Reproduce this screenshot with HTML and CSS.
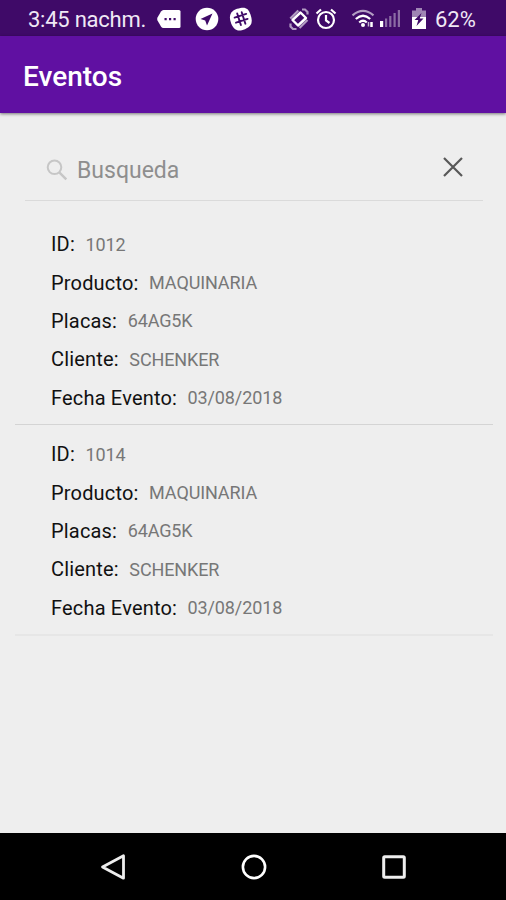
FILE: index.html
```html
<!DOCTYPE html>
<html lang="es">
<head>
  <meta charset="UTF-8">
  <meta name="viewport" content="width=device-width, initial-scale=1.0">
  <title>Eventos</title>
  <link rel="stylesheet" href="styles.css">
</head>
<body>
  <div class="status-bar">
    <span class="clock">3:45 nachm.</span>
    <svg class="icon-message" width="26" height="20" viewBox="0 0 26 20">
      <path d="M7.500 1H23a1.500 1.500 0 0 1 1.500 1.500v15A1.500 1.500 0 0 1 23 19H7.500Q6 19 5 17.500L1.500 11.500Q.8 10 1.500 8.500L5 2.500Q6 1 7.500 1z" fill="#fff"/>
      <path d="M8.500 9h2.200v2.200H8.500zM13 9h2.200v2.200H13zM17.500 9h2.200v2.200h-2.200z" fill="#3f0a68"/>
    </svg>
    <svg class="icon-telegram" width="24" height="24" viewBox="0 0 24 24">
      <circle cx="12" cy="12" r="11.300" fill="#fff"/>
      <path d="M17.500 6.500L5.500 12l4.700 1.500L12 18.500z" fill="#3f0a68"/>
    </svg>
    <svg class="icon-slack" width="24" height="24" viewBox="0 0 24 24">
      <path d="M8 1.800C16 -.5 19 .5 21.500 7.500S23 19.500 16 22.200 5 23.500 2.200 16.500 1 4.500 8 1.800z" fill="#fff"/>
      <path d="M8.200 6.500l3.700 11.500M12.700 5.200l3.700 11.500M5.600 10.600l11.600-3.700M7 15.700l11.600-3.800" stroke="#3f0a68" stroke-width="1.900" stroke-linecap="round"/>
    </svg>
    <svg class="icon-rotate" width="20" height="22" viewBox="0 0 20 22" fill="none" stroke="#fff">
      <path d="M11.500 4.500l5.500 5.500-8 7.500-5.500-5.500z" stroke-width="2.400" stroke-linejoin="round"/>
      <path d="M1.300 10.500l8-8M1.500 15.500v3l2.500 2.500h3.500M13 1.500h3l2.500 2.500v2.500M18.500 12l-8 8" stroke-width="2.200" opacity=".6"/>
    </svg>
    <svg class="icon-alarm" width="22" height="22" viewBox="0 0 22 22" fill="none" stroke="#fff" stroke-width="2.200">
      <circle cx="11" cy="12" r="8"/>
      <path d="M1.500 5.500L6 1.500M20.500 5.500L16 1.500M11 7v5.500l3.500 2.500"/>
    </svg>
    <svg class="icon-wifi" width="26" height="20" viewBox="0 0 26 20" fill="none" stroke="#fff" stroke-width="2.200">
      <path d="M1.500 6.300Q12 -2.500 22.500 6.300" opacity=".6"/>
      <path d="M4.800 10Q12 3.500 19.200 10M8.200 13.500Q12 10 15.800 13.500"/>
      <circle cx="12" cy="16" r="2" fill="#fff" stroke="none"/>
      <path d="M17.500 13v4.500" stroke-width="1.500" opacity=".7"/>
      <path d="M20.500 13v5" stroke-width="2.500"/>
    </svg>
    <svg class="icon-signal" width="21" height="19" viewBox="0 0 21 19" fill="#fff">
      <path d="M0 12h3.200v6H0z"/>
      <path d="M5 9.500h2.200V18H5zM9.200 7h2.200v11H9.200zM13.500 4h2.200v14h-2.200zM17.800 1H20v17h-2.200z" opacity=".4"/>
    </svg>
    <svg class="icon-battery" width="14" height="21" viewBox="0 0 14 21">
      <path d="M4 0h6v2.500h4V9H0V2.500h4z" fill="#fff" opacity=".5"/>
      <path d="M0 9h14v12H0z" fill="#fff"/>
      <path d="M9.500 5L2.500 12h3.800L4.500 18l7-7.500H7.700z" fill="#3f0a68"/>
    </svg>
    <span class="battery-level">62%</span>
  </div>

  <header class="app-bar">
    <h1>Eventos</h1>
  </header>

  <main class="content">
    <div class="search">
      <svg class="search-icon" width="22" height="22" viewBox="0 0 22 22" fill="none" stroke="#c6c6c6" stroke-width="2">
        <circle cx="8.500" cy="8.300" r="6.800"/>
        <path d="M13.300 13.300l7 7" stroke-width="2.400"/>
      </svg>
      <span class="search-hint">Busqueda</span>
      <svg class="search-clear" width="20" height="20" viewBox="0 0 20 20">
        <path d="M1 1l18 18M19 1L1 19" stroke="#585858" stroke-width="2.200"/>
      </svg>
    </div>

    <div class="event-list">
      <div class="event">
        <p><span class="label">ID:</span><span class="value">1012</span></p>
        <p><span class="label">Producto:</span><span class="value">MAQUINARIA</span></p>
        <p><span class="label">Placas:</span><span class="value">64AG5K</span></p>
        <p><span class="label">Cliente:</span><span class="value">SCHENKER</span></p>
        <p><span class="label">Fecha Evento:</span><span class="value">03/08/2018</span></p>
      </div>
      <div class="event">
        <p><span class="label">ID:</span><span class="value">1014</span></p>
        <p><span class="label">Producto:</span><span class="value">MAQUINARIA</span></p>
        <p><span class="label">Placas:</span><span class="value">64AG5K</span></p>
        <p><span class="label">Cliente:</span><span class="value">SCHENKER</span></p>
        <p><span class="label">Fecha Evento:</span><span class="value">03/08/2018</span></p>
      </div>
    </div>
  </main>

  <nav class="nav-bar">
    <svg width="28" height="28" viewBox="0 0 28 28" fill="none" stroke="#eee" stroke-width="2.800">
      <path d="M24.500 2.800v22.400L3.500 14z" stroke-linejoin="round"/>
    </svg>
    <svg width="28" height="28" viewBox="0 0 28 28" fill="none" stroke="#fff" stroke-width="2.600">
      <circle cx="14" cy="14" r="11.100"/>
    </svg>
    <svg width="28" height="28" viewBox="0 0 28 28" fill="none" stroke="#eee" stroke-width="3">
      <rect x="3.700" y="3.700" width="20.600" height="20.600" rx="1"/>
    </svg>
  </nav>
</body>
</html>
```
FILE: styles.css
```css
* {
  box-sizing: border-box;
}

body {
  margin: 0;
  height: 900px;
  display: flex;
  flex-direction: column;
  background-color: #eee;
  font-family: Roboto, "Liberation Sans", sans-serif;
  overflow: hidden;
}

svg {
  display: block;
  flex: none;
}

.status-bar {
  height: 36px;
  flex: none;
  display: flex;
  align-items: center;
  padding: 1px 0 0 28px;
  background-color: #3f0a68;
  color: #f0e8f5;
  font-size: 22px;
}

.clock {
  width: 128px;
  padding-top: 1px;
  letter-spacing: -0.25px;
  white-space: nowrap;
}

.icon-telegram {
  margin-left: 13px;
}

.icon-slack {
  margin-left: 10px;
}

.icon-rotate {
  margin-left: 36px;
}

.icon-alarm {
  margin-left: 6px;
}

.icon-wifi {
  margin-left: 14px;
}

.icon-signal {
  margin-left: 3px;
}

.icon-battery {
  margin-left: 11px;
}

.battery-level {
  margin-left: 9px;
  padding-top: 1px;
}

.app-bar {
  height: 77px;
  flex: none;
  display: flex;
  align-items: center;
  padding: 4px 23px 0;
  background-color: #6010a2;
  box-shadow: 0 1px 3px rgba(0, 0, 0, 0.5);
}

.app-bar h1 {
  margin: 0;
  color: #fff;
  font-size: 28px;
  font-weight: 500;
}

.content {
  flex: 1;
}

.search {
  display: flex;
  align-items: center;
  height: 65px;
  margin: 23px 23px 0 25px;
  padding: 5px 20px 0 21px;
  border-bottom: 1px solid #dadada;
}

.search-icon {
  margin-bottom: 1px;
}

.search-hint {
  flex: 1;
  margin-left: 9px;
  color: #8e8e8e;
  font-size: 23px;
}

.search-clear {
  margin-bottom: 7px;
}

.event-list {
  margin: 14px 13px 0 15px;
}

.event {
  height: 210px;
  padding: 10px 36px 0;
  border-bottom: 1px solid #d4d4d4;
}

.event:last-child {
  height: 211px;
  border-bottom: 2px solid #e6e6e6;
}

.event p {
  margin: 0;
  height: 38.4px;
  display: flex;
  align-items: center;
}

.label {
  color: #111;
  font-size: 20px;
  letter-spacing: 0.18px;
}

.value {
  margin-left: 10.5px;
  color: #777;
  font-size: 18px;
  letter-spacing: -0.12px;
}

.nav-bar {
  height: 67px;
  flex: none;
  display: flex;
  align-items: center;
  justify-content: space-between;
  padding: 0 98px 0 99px;
  background-color: #000;
}
```
